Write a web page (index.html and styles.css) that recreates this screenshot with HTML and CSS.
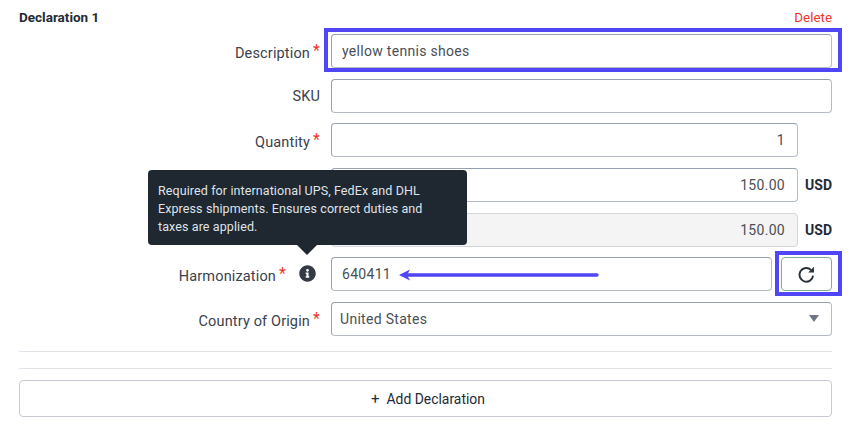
FILE: index.html
```html
<!DOCTYPE html>
<html lang="en">
<head>
<meta charset="utf-8">
<title>Declaration</title>
<link rel="stylesheet" href="styles.css">
</head>
<body>
<main class="page">
  <header class="head">
    <h2 class="title">Declaration 1</h2>
    <a class="delete">Delete</a>
  </header>
  <form class="rows">
    <div class="row">
      <label class="label">Description<span class="req">*</span></label>
      <div class="field">
        <div class="input">yellow tennis shoes</div>
        <span class="mark"></span>
      </div>
    </div>
    <div class="row">
      <label class="label label-plain">SKU</label>
      <div class="field"><div class="input"></div></div>
    </div>
    <div class="row">
      <label class="label">Quantity<span class="req">*</span></label>
      <div class="field"><div class="input right">1</div><span class="unit"></span></div>
    </div>
    <div class="row">
      <label class="label"></label>
      <div class="field"><div class="input right">150.00</div><span class="unit">USD</span></div>
    </div>
    <div class="row">
      <label class="label"></label>
      <div class="field"><div class="input right disabled">150.00</div><span class="unit">USD</span></div>
    </div>
    <div class="row">
      <label class="label label-info">Harmonization<span class="req">*</span>
        <svg class="info" viewBox="0 0 512 512" width="17" height="17" aria-hidden="true"><path fill="#343a44" d="M256 8C119 8 8 119 8 256s111 248 248 248 248-111 248-248S393 8 256 8zm0 110a42 42 0 1 1 0 84 42 42 0 0 1 0-84zm56 254c0 7-5 12-12 12h-88c-7 0-12-5-12-12v-24c0-7 5-12 12-12h12v-64h-12c-7 0-12-5-12-12v-24c0-7 5-12 12-12h64c7 0 12 5 12 12v100h12c7 0 12 5 12 12z"/></svg>
      </label>
      <div class="field field-hs">
        <div class="input">640411
          <svg class="arrow" width="202" height="14" viewBox="0 0 202 14" aria-hidden="true"><path d="M8 7H199" stroke="#5046f5" stroke-width="3.4" stroke-linecap="round" fill="none"/><path d="M1 7 12 1.500 9 7l3 5.500z" fill="#5046f5"/></svg>
        </div>
        <div class="refresh-wrap">
          <button class="refresh" type="button">
            <svg viewBox="0 0 24 24" width="21" height="21" aria-hidden="true"><path d="M19.500 13.200a7.800 7.800 0 1 1-2.400-6.500" fill="none" stroke="#2a323c" stroke-width="2.200"/><path d="M20.500 3.200v6.600h-6.600z" fill="#2a323c"/></svg>
          </button>
          <span class="mark mark-btn"></span>
        </div>
      </div>
      <div class="tip">Required for international UPS, FedEx and DHL Express shipments. Ensures correct duties and taxes are applied.</div>
    </div>
    <div class="row">
      <label class="label">Country of Origin<span class="req">*</span></label>
      <div class="field">
        <div class="input select">United States<span class="caret"></span></div>
      </div>
    </div>
  </form>
  <hr class="rule rule-a">
  <hr class="rule rule-b">
  <button class="add" type="button"><span class="plus">+</span>Add Declaration</button>
</main>
</body>
</html>
```
FILE: styles.css
```css
* { box-sizing: border-box; }
html, body { margin: 0; background: #fff; }
body { font-family: Roboto, "Liberation Sans", sans-serif; color: #323a45; height: 430px; overflow: hidden; }
.page { padding: 10px 20px 0 19px; }
.head { display: flex; justify-content: space-between; align-items: center; height: 15px; }
.title { margin: 0 0 2px; font-size: 13.500px; font-weight: 700; color: #232b36; }
.delete { font-size: 13.400px; color: #f0352a; }
.rows { display: flex; flex-direction: column; gap: 10.670px; margin-top: 9px; }
.row { position: relative; display: flex; height: 34px; }
.label { flex: 0 0 312px; display: flex; justify-content: flex-end; align-items: center; padding: 5px 11px 0 0; font-size: 14.500px; color: #3a424d; letter-spacing: .15px; position: relative; }
.label-plain { padding-top: 2px; }
.label-info { padding-right: 45px; }
.req { color: #f0352a; font-size: 16px; margin-left: 3px; margin-bottom: 5px; width: 7px; line-height: 1; }
.field { flex: 1; display: flex; position: relative; }
.input { flex: 1; height: 34px; border: 1px solid #97a1b0; border-right-color: #b6bcc6; border-bottom-color: #b6bcc6; border-radius: 4px; background: #fff; display: flex; align-items: center; padding: 0 10px; font-size: 14px; color: #4a4f57; letter-spacing: .3px; position: relative; }
.right { justify-content: flex-end; padding-right: 12px; }
.disabled { background: #f4f4f4; border-color: #d3d6db; }
.unit { flex: 0 0 34px; font-size: 14px; font-weight: 700; color: #232b36; display: flex; align-items: center; justify-content: flex-end; }
.field-hs { gap: 9px; }
.refresh-wrap { flex: 0 0 51px; position: relative; }
.refresh { width: 51px; height: 34px; border: 1px solid #7fae90; border-radius: 4px; background: #fff; display: flex; align-items: center; justify-content: center; padding: 0; }
.mark { position: absolute; left: -7px; right: -10px; top: -6px; bottom: -4px; border: 4px solid #5046f5; pointer-events: none; }
.mark-btn { left: -6px; top: -6px; bottom: -5px; }
.select { padding-left: 8px; justify-content: space-between; }
.caret { width: 0; height: 0; border-left: 5px solid transparent; border-right: 5px solid transparent; border-top: 7px solid #6d7682; margin-right: 2px; }
.info { position: absolute; right: 15px; top: 8px; }
.arrow { position: absolute; left: 66px; top: 10px; }
.tip { position: absolute; left: 129px; top: -87px; width: 319px; height: 75px; padding: 12px 30px 0 10px; background: #1f2731; border-radius: 4px; color: #dfe3e8; font-size: 12.500px; line-height: 18px; letter-spacing: .1px; }
.tip::after { content: ""; position: absolute; left: 149px; bottom: -10px; border-left: 10px solid transparent; border-right: 10px solid transparent; border-top: 10px solid #1f2731; }
.rule { border: 0; border-top: 1px solid #dfe2e8; margin: 0; }
.rule-a { margin-top: 15px; }
.rule-b { margin-top: 16px; }
.add { display: flex; align-items: center; justify-content: center; width: 100%; height: 37px; margin-top: 11px; padding: 1px 0 0 5px; background: #fff; border: 1px solid #c5cad3; border-radius: 4px; font-family: inherit; font-size: 13.900px; color: #232b36; }
.plus { margin-right: 7px; font-size: 15px; }
```
